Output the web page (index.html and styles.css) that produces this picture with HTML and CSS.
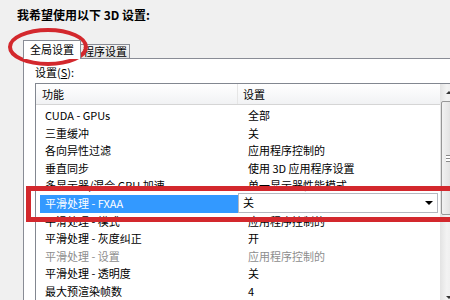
FILE: index.html
```html
<!DOCTYPE html>
<html lang="zh-CN">
<head>
    <meta charset="UTF-8">
    <title>3D 设置</title>
    <link rel="stylesheet" href="styles.css">
</head>
<body>
    <div class="window">
        <h1 class="title">我希望使用以下 3D 设置:</h1>

        <div class="tabs">
            <div class="tab active">全局设置</div>
            <div class="tab">程序设置</div>
        </div>

        <div class="panel">
            <div class="label">设置(<u>S</u>):</div>

            <div class="listbox">
                <div class="list">
                    <div class="list-head">
                        <div class="col-name">功能</div>
                        <div class="col-value">设置</div>
                    </div>
                    <div class="rows">
                        <div class="row"><div class="name">CUDA - GPUs</div><div class="value">全部</div></div>
                        <div class="row"><div class="name">三重缓冲</div><div class="value">关</div></div>
                        <div class="row"><div class="name">各向异性过滤</div><div class="value">应用程序控制的</div></div>
                        <div class="row"><div class="name">垂直同步</div><div class="value">使用 3D 应用程序设置</div></div>
                        <div class="row"><div class="name">多显示器/混合 GPU 加速</div><div class="value">单一显示器性能模式</div></div>
                        <div class="row selected">
                            <div class="name">平滑处理 - FXAA</div>
                            <div class="value">
                                <div class="combo"><span>关</span><span class="arrow"></span></div>
                            </div>
                        </div>
                        <div class="row"><div class="name">平滑处理 - 模式</div><div class="value">应用程序控制的</div></div>
                        <div class="row"><div class="name">平滑处理 - 灰度纠正</div><div class="value">开</div></div>
                        <div class="row disabled"><div class="name">平滑处理 - 设置</div><div class="value">应用程序控制的</div></div>
                        <div class="row"><div class="name">平滑处理 - 透明度</div><div class="value">关</div></div>
                        <div class="row"><div class="name">最大预渲染帧数</div><div class="value">4</div></div>
                    </div>
                </div>

                <div class="scrollbar">
                    <div class="sb-btn"><span class="up"></span></div>
                    <div class="sb-thumb"><span class="grip"></span></div>
                    <div class="sb-track"></div>
                    <div class="sb-btn"><span class="down"></span></div>
                </div>
            </div>
        </div>

        <!-- red annotations drawn over the screenshot -->
        <svg class="mark-circle" width="100" height="46" viewBox="0 0 100 46">
            <ellipse cx="48" cy="22" rx="38" ry="17" fill="none" stroke="#d3282d" stroke-width="4"/>
        </svg>
        <div class="mark-box"></div>
    </div>
</body>
</html>
```

FILE: styles.css
```css
body {
    margin: 0;
    background-color: #f0f0f0;
    font-family: "Noto Sans CJK SC", "Noto Sans", sans-serif;
    font-size: 11px;
    color: #000;
    overflow: hidden;
}

.window {
    position: relative;
    height: 300px;
    overflow: hidden;
}

.title {
    margin: 0;
    padding: 7px 0 0 17px;
    font-size: 12px;
    line-height: 16px;
    font-weight: bold;
}

/* tabs */
.tabs {
    display: flex;
    align-items: flex-end;
    margin: 17px 0 0 23px;
}

.tab {
    height: 13px;
    line-height: 13px;
    padding: 0 2px;
    border: 1px solid #898c95;
    border-bottom: 0;
    background: linear-gradient(#f4f4f4, #e2e2e2);
    margin-left: -1px;
}

.tab.active {
    position: relative;
    z-index: 1;
    margin-left: 0;
    padding: 2px 6px 3px;
    margin-bottom: -1px;
    background: #fff;
}

.panel {
    margin-left: 23px;
    height: 260px;
    padding: 6px 0 0 11px;
    background: #fff;
    border-top: 1px solid #898c95;
    border-left: 1px solid #898c95;
}

.label {
    line-height: 14px;
    margin-bottom: 4px;
}

/* list box */
.listbox {
    display: flex;
    width: 421px;
    height: 222px;
    border: 1px solid #828790;
}

.list {
    flex: 1;
}

.list-head {
    display: flex;
    height: 20px;
    line-height: 20px;
    background: linear-gradient(#ffffff, #f1f2f4);
    border-bottom: 1px solid #d5d5d5;
}

.col-name {
    width: 202px;
    padding-left: 6px;
    box-sizing: border-box;
    border-right: 1px solid #e6e6e6;
}

.col-value {
    padding-left: 5px;
}

.rows {
    padding-top: 2px;
}

.row {
    display: flex;
    height: 17.6px;
    line-height: 17.6px;
}

.row .name {
    width: 202px;
    padding-left: 9px;
    box-sizing: border-box;
    white-space: nowrap;
}

.row .value {
    flex: 1;
    padding-left: 10px;
    white-space: nowrap;
}

.row.disabled {
    color: #8d8d8d;
}

.row.selected .name {
    width: 198px;
    margin-left: 4px;
    padding-left: 5px;
    background: #3399ff;
    color: #fff;
}

.row.selected .value {
    padding-left: 0;
}

.combo {
    display: flex;
    align-items: center;
    justify-content: space-between;
    width: 200px;
    height: 20px;
    margin-top: -2px;
    padding: 0 4px;
    box-sizing: border-box;
    background: #fff;
    border: 1px solid #b5b8c0;
    color: #000;
}

.arrow {
    width: 0;
    height: 0;
    border-left: 4px solid transparent;
    border-right: 4px solid transparent;
    border-top: 4px solid #000;
}

/* scrollbar */
.scrollbar {
    display: flex;
    flex-direction: column;
    width: 17px;
    background: linear-gradient(90deg, #e3e3e3, #f3f3f3 40%, #e9e9e9);
}

.sb-btn {
    height: 17px;
    display: flex;
    align-items: center;
    justify-content: center;
}

.up, .down {
    width: 0;
    height: 0;
    border-left: 3px solid transparent;
    border-right: 3px solid transparent;
}

.up {
    border-bottom: 3px solid #333;
}

.down {
    border-top: 3px solid #333;
}

.sb-thumb {
    height: 112px;
    margin: 0 1px;
    border: 1px solid #979797;
    border-radius: 2px;
    background: linear-gradient(90deg, #f2f2f2, #e6e6e6 50%, #d6d6d6);
    display: flex;
    align-items: center;
    justify-content: center;
}

.grip {
    width: 6px;
    height: 5px;
    border-top: 1px solid #8a8a8a;
    border-bottom: 1px solid #8a8a8a;
    background: linear-gradient(#fff 40%, #8a8a8a 40%, #8a8a8a 60%, #fff 60%);
}

.sb-track {
    flex: 1;
}

/* red marks */
.mark-circle {
    position: absolute;
    left: 0;
    top: 25px;
}

.mark-box {
    position: absolute;
    left: 26px;
    top: 186px;
    width: 440px;
    height: 36px;
    box-sizing: border-box;
    border: 5px solid #d3282d;
}
```
